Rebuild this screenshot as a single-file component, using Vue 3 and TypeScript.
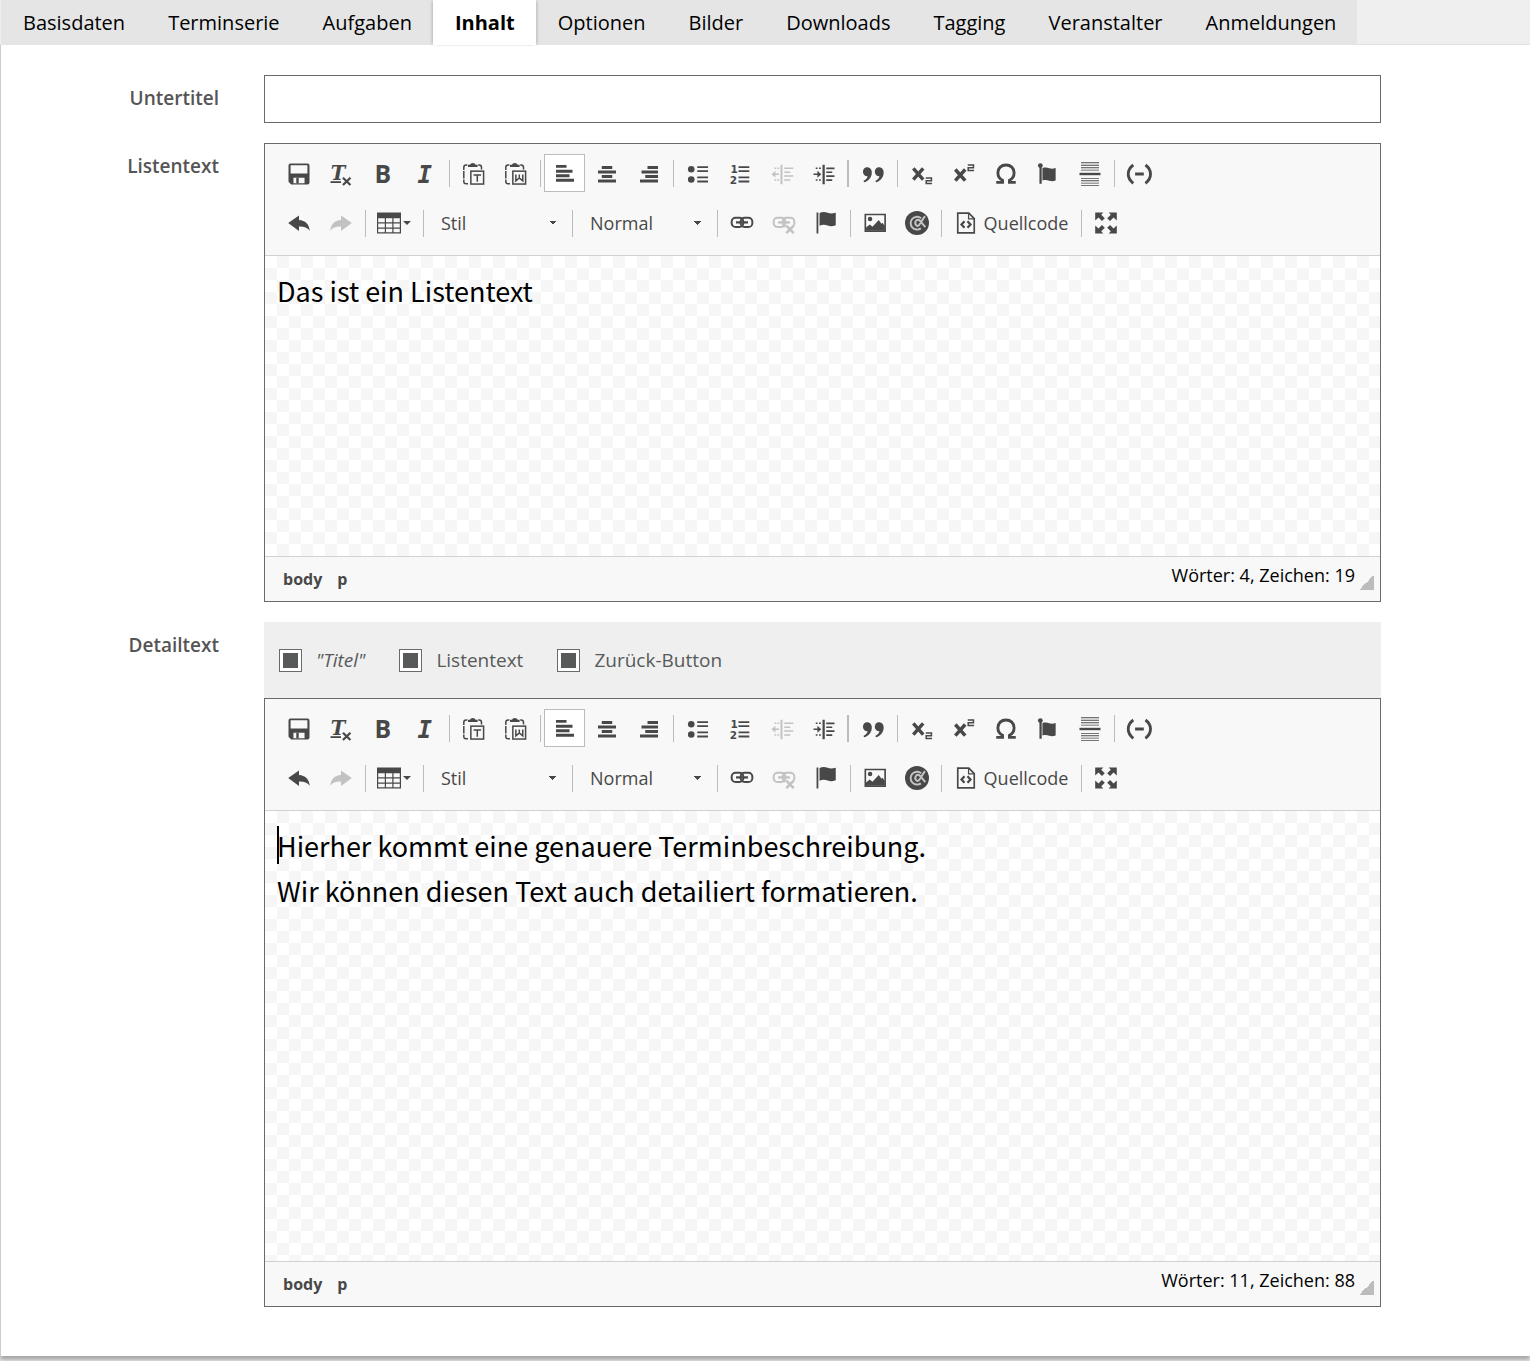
<script setup lang="ts">
import { ref } from 'vue'

type Tool =
  | { kind: 'button'; icon: string; title: string; disabled?: boolean; active?: boolean; label?: string; menu?: boolean }
  | { kind: 'select'; title: string; value: string; narrow?: boolean }
  | { kind: 'sep'; thick?: boolean }

interface Editor {
  id: string
  label: string
  paragraphs: string[]
  size: 'small' | 'large'
  words: number
  chars: number
  focused: boolean
}

const tabs = ['Basisdaten', 'Terminserie', 'Aufgaben', 'Inhalt', 'Optionen', 'Bilder', 'Downloads', 'Tagging', 'Veranstalter', 'Anmeldungen']
const activeTab = ref('Inhalt')
const subtitle = ref('')

const options = ref([
  { id: 'opt-title', label: '"Titel"', italic: true, checked: true },
  { id: 'opt-list', label: 'Listentext', italic: false, checked: true },
  { id: 'opt-back', label: 'Zurück-Button', italic: false, checked: true },
])

const clipboard =
  '<path d="M3.600 2H2.800Q1.200 2 1.200 3.600v9.400q0 1.500 1.500 1.500h1.500M10.800 2h.6Q13 2 13 3.600v1.400" fill="none" stroke="currentColor" stroke-dasharray="5 .7"/><path d="M4 3.300V1.800h1.300Q5.700.6 7.200.6t1.900 1.200h1.300v1.500z"/><rect x="5.900" y="6.100" width="8.500" height="8.600" fill="none" stroke="currentColor"/>'
const chain =
  '<g fill="none" stroke="currentColor" stroke-width="1.300"><rect x="1.100" y="4.500" width="7.800" height="6.200" rx="2.600"/><rect x="7.100" y="4.500" width="7.800" height="6.200" rx="2.600"/><path d="M4 7.600h8" stroke-width="1.500"/></g>'

const icons: Record<string, string> = {
  save: '<path fill-rule="evenodd" d="M2.300 1h11.400Q15 1 15 2.300v11.400q0 1.300-1.300 1.300H2.800L1 13.200V2.300Q1 1 2.300 1zM2.400 2.200v5.500h11.200V2.200zM4.300 10.500v3.700h7.400v-3.700z"/><path d="M6.200 10.500h1.600v3.700H6.200z"/>',
  removeFormat: '<text x="1.200" y="12" font-family="DejaVu Serif" font-weight="700" font-style="italic" font-size="13">T</text><path d="M1 12.800h7V14H1z"/><path d="m9.300 10.500 5 4.800m0-4.800-5 4.800" fill="none" stroke="currentColor" stroke-width="1.500"/>',
  bold: '<text x="2.400" y="14" font-family="Open Sans" font-weight="700" font-size="16.500">B</text>',
  italic: '<text x="3" y="13.800" font-family="DejaVu Sans Mono" font-weight="700" font-style="italic" font-size="16">I</text>',
  pasteText: clipboard + '<path d="M7.700 8.700h5M10.200 8.700v4.500" fill="none" stroke="currentColor"/>',
  pasteWord: clipboard + '<path d="M7.900 8.300v4.300l2.300-2 2.300 2V8.300M10.200 8.300v2.500" fill="none" stroke="currentColor"/>',
  left: '<path d="M2 2h7v1.900H2zM2 5.200h11v1.900H2zM2 8.200h9v1.900H2zM2 11.200h12v1.900H2z"/>',
  center: '<path d="M4.500 2.700h7v1.900h-7zM2 5.700h12v1.900H2zM4.500 8.700h7v1.900h-7zM2 11.700h12v1.900H2z"/>',
  right: '<path d="M7 2.700h7v1.900H7zM3 5.700h11v1.900H3zM5.500 8.700H14v1.900H5.500zM2 11.700h12v1.900H2z"/>',
  bullets: '<circle cx="3.500" cy="4.800" r="2.200"/><circle cx="3.500" cy="11.700" r="2.200"/><path d="M7.500 2.800h7.200V4H7.500zM7.500 5.500h7.200v1.200H7.500zM7.500 9.700h7.200v1.200H7.500zM7.500 12.400h7.200v1.200H7.500z"/>',
  numbers: '<text x="1.600" y="7.400" font-family="DejaVu Sans" font-weight="700" font-size="7">1</text><text x="1.200" y="14.800" font-family="DejaVu Sans" font-weight="700" font-size="7">2</text><path d="M7 2.800h7.200V4H7zM7 5.500h7.200v1.200H7zM7 9.700h7.200v1.200H7zM7 12.400h7.200v1.200H7z"/>',
  outdent: '<path d="M7 1.800h1.300v13H7zM9.500 3.700h6v1h-6zM9.500 6.300h4v1h-4zM9.500 8.900h6v1h-6zM9.500 11.500h4v1h-4zM3 3.700h1.200v1H3zM5 3.700h1.200v1H5zM3 11.500h1.200v1H3zM5 11.500h1.200v1H5zM1 8.100l2.600-2.300v1.800H6v1H3.600v1.800z"/>',
  indent: '<path d="M7 1.800h1.500v13H7zM9.500 3.700h5.500v1.100H9.500zM9.500 6.300h4v1.100h-4zM9.500 8.900h5.500V10H9.500zM9.500 11.500h4v1.100h-4zM2.500 3.700h1.200v1H2.500zM4.700 3.700h1.200v1H4.700zM2.500 11.500h1.200v1H2.500zM4.700 11.500h1.200v1H4.700zM6.200 8.200 3.600 5.900v1.700H1v1.100h2.600v1.800z"/>',
  quote: '<path d="M4 3.500c2 0 3.200 1.400 3.200 3.500 0 3-1.900 5.600-5 6.500l-.6-.8c1.500-.8 2.500-1.900 2.800-3.200C2.500 9.500 1.300 8.300 1.300 6.500 1.300 4.800 2.500 3.500 4 3.500zM11.900 3.500c2 0 3.200 1.400 3.200 3.500 0 3-1.900 5.600-5 6.500l-.6-.8c1.500-.8 2.500-1.900 2.800-3.200-1.900 0-3.100-1.200-3.100-3 0-1.700 1.200-3 2.700-3z"/>',
  sub: '<path d="m2.200 4.300 6.600 7.400M8.800 4.300l-6.600 7.400" fill="none" stroke="currentColor" stroke-width="2.300"/><path d="M10.500 10.700h3.800v1.800h-3.500v1.900h3.900" fill="none" stroke="currentColor"/>',
  sup: '<path d="m2.200 5 6.600 7.400M8.800 5l-6.600 7.400" fill="none" stroke="currentColor" stroke-width="2.300"/><path d="M10.500 2h3.800v1.800h-3.500v1.900h3.900" fill="none" stroke="currentColor"/>',
  omega: '<path d="M1.500 13.600h4.200v-1.400C3.700 11.300 2.600 9.400 2.600 7.200 2.600 4 4.900 2 8 2s5.400 2 5.400 5.200c0 2.200-1.100 4.100-3.100 5v1.400h4.200" fill="none" stroke="currentColor" stroke-width="1.900"/>',
  anchor: '<circle cx="2.900" cy="2.400" r="1.600"/><path d="M2.300 3h1.500v11.500H2.300zM4.300 4c1.800-.6 3.200-.3 4.500.1s2.600.5 4.300-.1v8.400c-1.700.6-3 .5-4.300.1s-2.700-.7-4.500-.1z"/>',
  pagebreak: '<path d="M1 7.200h14v1.600H1z"/><path d="M2 .2h12v.6H2zM2 1.900h12v.6H2zM2 3.500h12v.6H2zM2 5.100h12v.6H2zM2 10.600h12v.6H2zM2 12.200h12v.6H2zM2 13.800h12v.6H2zM2 15.300h12v.6H2z"/>',
  hyphen: '<path d="M4.200 2C-.3 5.200-.3 10.800 4.200 14.200M12.300 2c4.500 3.200 4.500 8.800 0 12.200M5.400 8h5.800" fill="none" stroke="currentColor" stroke-width="1.900"/>',
  undo: '<path d="M.8 8 8 3v3c4.200.2 6.700 2.800 7.200 7.200-1.800-2.100-3.700-2.900-7.200-2.800v2.900z"/>',
  redo: '<path d="M15.200 8 8 3v3C3.800 6.200 1.300 8.800.8 13.200c1.800-2.100 3.700-2.900 7.200-2.800v2.900z"/>',
  table: '<path fill-rule="evenodd" d="M0 1h16v14H0zM.8 4.800v2.700h4.400V4.800zM6 4.800v2.700h4.200V4.800zM11 4.800v2.700h4.200V4.800zM.8 8.400V11h4.400V8.400zM6 8.400V11h4.200V8.400zM11 8.400V11h4.200V8.400zM.8 11.800v2.400h4.400v-2.400zM6 11.800v2.400h4.200v-2.400zM11 11.800v2.400h4.200v-2.400z"/>',
  link: chain,
  unlink: chain + '<path d="m9.500 9.800 5 5m0-5-5 5" fill="none" stroke="#f8f8f8" stroke-width="3.400"/><path d="m9.500 9.800 5 5m0-5-5 5" fill="none" stroke="currentColor" stroke-width="1.700"/>',
  flag: '<path d="M1.700 1h1.200v14H1.700zM3.700 1.300c2.200-1 3.900-.6 5.400-.1s3 .7 5.400-.1v8.400c-2.400.9-3.900.7-5.400.2s-3.200-.9-5.400.1z"/>',
  image: '<path fill-rule="evenodd" d="M1 1.800h14.300V14H1zM2.100 2.900v10h12.100v-10z"/><circle cx="4.700" cy="5.400" r="1.500"/><path d="M2 13v-2l2.500-2 1.800 1.500L10.500 6l1.800 2.500.7-.6 1.500 2.100v3z"/>',
  media: '<circle cx="8" cy="8" r="8"/><path d="M13.300 3.400 9.500 9.200Q8.700 10.400 7.700 9.700 6 8 7.600 6.200q1.200-.9 2.300.3l3.700 4.200M10.800 4.800a4.300 4.300 0 1 0-.2 6.800" fill="none" stroke="#c4c4c4" stroke-width="1.300"/>',
  source: '<path d="M2.500 1.400h7.400l3.600 3.700v9.500h-11z" fill="none" stroke="currentColor" stroke-width="1.100"/><path d="M9.700 1.500v3.700h3.700" fill="none" stroke="currentColor" stroke-width=".8"/><path d="M7 6.800 5 9l2 2.200M9 6.800 11 9l-2 2.200" fill="none" stroke="currentColor" stroke-width="1.500"/>',
  maximize: '<path d="M.8 1h5.400L4.800 2.500l2.400 2.300-1.900 1.900L3 4.300.8 6.400zM15.200 1H9.800l1.400 1.500-2.400 2.300 1.900 1.900L13 4.300l2.200 2.100zM.8 15h5.400l-1.400-1.500 2.400-2.300-1.900-1.900L3 11.700.8 9.600zM15.200 15H9.800l1.400-1.500-2.400-2.300 1.900-1.900 2.300 2.400 2.200-2.100z"/>',
}

const btn = (icon: string, title: string, extra: object = {}): Tool => ({ kind: 'button', icon, title, ...extra })
const sep: Tool = { kind: 'sep' }

const toolbar: Tool[][] = [
  [
    btn('save', 'Speichern'), btn('removeFormat', 'Formatierung entfernen'), btn('bold', 'Fett'), btn('italic', 'Kursiv'), sep,
    btn('pasteText', 'Als Text einfügen'), btn('pasteWord', 'Aus Word einfügen'), sep,
    btn('left', 'Linksbündig', { active: true }), btn('center', 'Zentriert'), btn('right', 'Rechtsbündig'), sep,
    btn('bullets', 'Liste'), btn('numbers', 'Nummerierte Liste'), btn('outdent', 'Einzug verkleinern', { disabled: true }), btn('indent', 'Einzug vergrößern'),
    { kind: 'sep', thick: true },
    btn('quote', 'Zitatblock'), sep,
    btn('sub', 'Tiefgestellt'), btn('sup', 'Hochgestellt'), btn('omega', 'Sonderzeichen'), btn('anchor', 'Anker'), btn('pagebreak', 'Seitenumbruch'), sep,
    btn('hyphen', 'Bedingter Trennstrich'),
  ],
  [
    btn('undo', 'Rückgängig'), btn('redo', 'Wiederherstellen', { disabled: true }), sep,
    btn('table', 'Tabelle', { menu: true }), sep,
    { kind: 'select', title: 'Stil', value: 'Stil' }, sep,
    { kind: 'select', title: 'Format', value: 'Normal', narrow: true }, sep,
    btn('link', 'Link'), btn('unlink', 'Link entfernen', { disabled: true }), btn('flag', 'Anker einfügen'), sep,
    btn('image', 'Bild'), btn('media', 'Medien'), sep,
    btn('source', 'Quellcode', { label: 'Quellcode' }), sep,
    btn('maximize', 'Maximieren'),
  ],
]

const editors: Editor[] = [
  { id: 'list', label: 'Listentext', paragraphs: ['Das ist ein Listentext'], size: 'small', words: 4, chars: 19, focused: false },
  {
    id: 'detail',
    label: 'Detailtext',
    paragraphs: ['Hierher kommt eine genauere Terminbeschreibung.', 'Wir können diesen Text auch detailiert formatieren.'],
    size: 'large',
    words: 11,
    chars: 88,
    focused: true,
  },
]
</script>

<template>
  <main class="page">
    <nav class="tabs" role="tablist">
      <button
        v-for="tab in tabs"
        :key="tab"
        type="button"
        role="tab"
        class="tab"
        :class="{ current: tab === activeTab }"
        :aria-selected="tab === activeTab"
        @click="activeTab = tab"
      >{{ tab }}</button>
    </nav>

    <form class="panel" @submit.prevent>
      <div class="row">
        <label class="name" for="subtitle">Untertitel</label>
        <input id="subtitle" v-model="subtitle" class="text-input" type="text" />
      </div>

      <div v-for="ed in editors" :key="ed.id" class="row">
        <span :id="`${ed.id}-label`" class="name">{{ ed.label }}</span>
        <div class="field">
          <div v-if="ed.id === 'detail'" class="options">
            <label v-for="o in options" :key="o.id" class="option" :for="o.id">
              <input :id="o.id" v-model="o.checked" type="checkbox" class="check" />
              <span :class="{ italic: o.italic }">{{ o.label }}</span>
            </label>
          </div>

          <div class="editor">
            <div class="toolbar" role="toolbar">
              <div v-for="(line, li) in toolbar" :key="li" class="line">
                <template v-for="(tool, ti) in line" :key="ti">
                  <span v-if="tool.kind === 'sep'" class="sep" :class="{ thick: tool.thick }"></span>
                  <select v-else-if="tool.kind === 'select'" class="combo" :class="{ narrow: tool.narrow }" :aria-label="tool.title">
                    <option>{{ tool.value }}</option>
                  </select>
                  <button
                    v-else
                    type="button"
                    class="tool"
                    :class="{ active: tool.active, labelled: tool.label, menu: tool.menu }"
                    :disabled="tool.disabled"
                    :aria-label="tool.title"
                  >
                    <svg class="icon" viewBox="0 0 16 16" fill="currentColor" aria-hidden="true" v-html="icons[tool.icon]"></svg>
                    <span v-if="tool.label">{{ tool.label }}</span>
                    <span v-if="tool.menu" class="arrow"></span>
                  </button>
                </template>
              </div>
            </div>
            <div
              class="content"
              :class="[ed.size, { focused: ed.focused }]"
              contenteditable="true"
              spellcheck="false"
              role="textbox"
              aria-multiline="true"
              :aria-labelledby="`${ed.id}-label`"
            >
              <p v-for="p in ed.paragraphs" :key="p">{{ p }}</p>
            </div>
            <div class="status">
              <div class="trail">
                <a href="#">body</a>
                <a href="#">p</a>
              </div>
              <div class="count">Wörter: {{ ed.words }}, Zeichen: {{ ed.chars }}</div>
              <span class="resizer"></span>
            </div>
          </div>
        </div>
      </div>
    </form>
  </main>
</template>

<style>
body {
  margin: 0;
  background: #efefef;
}
</style>

<style scoped>
.page {
  font-family: "Open Sans", "Noto Sans", sans-serif;
  padding-bottom: 5px;
  overflow: hidden;
}
.page * {
  box-sizing: border-box;
}
button,
input,
select {
  font: inherit;
  margin: 0;
  border-radius: 0;
}
.tabs {
  display: flex;
  height: 45px;
  padding-left: 1px;
  box-shadow: inset 0 -1px 0 #e2e2e2;
}
.tab {
  border: 0;
  padding: 0 21px 0 22px;
  background: #e5e5e5;
  color: #000;
  font-size: 20px;
  line-height: 26px;
  white-space: nowrap;
}
.tab.current {
  position: relative;
  z-index: 1;
  background: #fff;
  font-weight: 700;
  box-shadow: -2px 0 3px -1px rgba(0, 0, 0, 0.2), 2px 0 3px -1px rgba(0, 0, 0, 0.2);
}
.panel {
  display: flex;
  flex-direction: column;
  gap: 20px;
  border-left: 1px solid #ccc;
  padding: 30px 149px 49px 0;
  background: #fff;
  box-shadow: 0 4px 4px rgba(0, 0, 0, 0.3);
}
.row {
  display: grid;
  grid-template-columns: 218px minmax(0, 1fr);
  column-gap: 45px;
}
.name {
  padding-top: 10px;
  text-align: right;
  color: #555;
  font-size: 19px;
  font-weight: 600;
  line-height: 26px;
}
.text-input {
  width: 100%;
  height: 48px;
  padding: 0 12px;
  border: 1px solid #696a6d;
  background: #fff;
  font-size: 19px;
}
.options {
  display: flex;
  gap: 34px;
  height: 76px;
  padding-left: 15px;
  align-items: center;
  background: #efefef;
  color: #585a5a;
  font-size: 19px;
  line-height: 26px;
}
.option {
  display: flex;
  align-items: center;
  gap: 14px;
}
.italic {
  font-style: italic;
}
.check {
  appearance: none;
  width: 23px;
  height: 23px;
  border: 1px solid #696a6d;
  background: #fff;
}
.check:checked {
  background: #585a5a;
  box-shadow: inset 0 0 0 3px #fff;
}
.editor {
  border: 1px solid #696a6d;
  background: #f8f8f8;
}
.toolbar {
  display: flex;
  flex-direction: column;
  gap: 12px;
  padding: 10px 0 13px 13px;
  border-bottom: 1px solid #d1d1d1;
}
.line {
  display: flex;
  align-items: center;
  height: 38px;
}
.tool {
  display: flex;
  flex: none;
  align-items: center;
  justify-content: center;
  width: 41px;
  height: 38px;
  margin-right: 1px;
  padding: 0;
  border: 1px solid transparent;
  background: none;
  color: #484848;
  font-size: 18px;
  line-height: 24px;
}
.line:first-child .tool {
  padding-top: 2px;
}
.tool.active {
  background: #fff;
  border-color: #bcbcbc;
}
.tool:disabled {
  opacity: 0.3;
}
.tool.labelled {
  width: 132px;
  gap: 6px;
}
.tool.menu {
  width: 50px;
  gap: 2px;
}
.icon {
  flex: none;
  width: 24px;
  height: 24px;
  overflow: visible;
}
.arrow {
  border: 4px solid transparent;
  border-top-color: #484848;
  border-bottom: 0;
}
.sep {
  flex: none;
  width: 1px;
  height: 27px;
  margin: 0 3px;
  background: #bcbcbc;
}
.sep.thick {
  width: 2px;
  margin-left: 2px;
}
.combo {
  appearance: none;
  width: 142px;
  height: 38px;
  padding: 0 30px 0 14px;
  border: 0;
  background: linear-gradient(to bottom right, #484848 50%, transparent 50%) right 12px center / 4px 4px no-repeat,
    linear-gradient(to bottom left, #484848 50%, transparent 50%) right 16px center / 4px 4px no-repeat;
  color: #484848;
  font-size: 18px;
  line-height: 24px;
}
.combo.narrow {
  width: 138px;
}
.content {
  padding: 12px;
  background: conic-gradient(#f6f6f6 25%, #fff 0 50%, #f6f6f6 0 75%, #fff 0) 0 0 / 24px 24px;
  color: #000;
  font-family: "Noto Sans CJK SC", sans-serif;
  font-size: 27px;
  font-weight: 400;
  line-height: 45px;
  outline: 0;
}
.content.small {
  min-height: 300px;
}
.content.large {
  min-height: 450px;
}
.content p {
  position: relative;
  margin: 0;
}
.content.focused p:first-child::before {
  content: "";
  position: absolute;
  top: 3px;
  left: 0;
  width: 2px;
  height: 38px;
  background: #000;
}
.status {
  display: flex;
  align-items: center;
  height: 45px;
  padding: 0 6px 0 18px;
  border-top: 1px solid #d1d1d1;
}
.trail {
  display: flex;
  flex: 1;
  gap: 15px;
}
.trail a {
  color: #484848;
  font-size: 16px;
  font-weight: 700;
  line-height: 22px;
  text-decoration: none;
}
.count {
  margin-right: 4px;
  padding-bottom: 8px;
  color: #000;
  font-size: 18px;
  line-height: 22px;
}
.resizer {
  width: 15px;
  height: 15px;
  margin-top: 6px;
  background: linear-gradient(to bottom right, transparent 50%, #bcbcbc 50%);
}
</style>
